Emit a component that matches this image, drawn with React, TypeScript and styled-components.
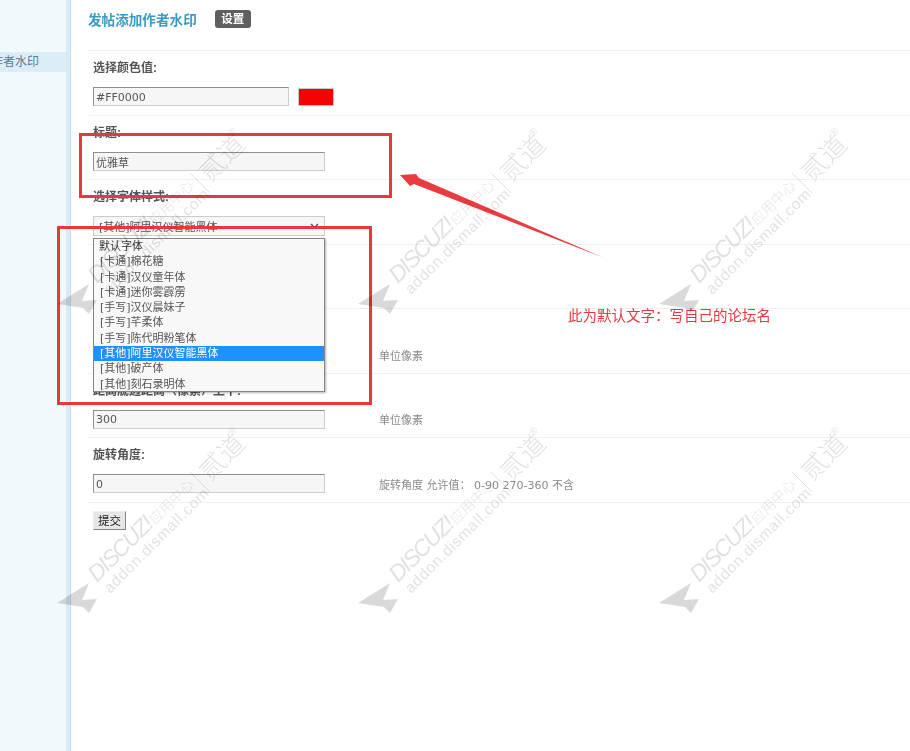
import React from "react";
import styled, { createGlobalStyle } from "styled-components";

const Global = createGlobalStyle`
  html, body { margin: 0; padding: 0; height: 100%; overflow: hidden; background: #fff; }
  body { font-family: "Liberation Sans", "Noto Sans CJK SC", sans-serif; font-size: 12px; color: #555; }
  * { box-sizing: border-box; }
`;

const Page = styled.div`
  position: relative;
  display: flex;
  width: 910px;
  height: 751px;
  overflow: hidden;
  filter: blur(0.35px);
`;

const Sidebar = styled.aside`
  flex: 0 0 70px;
  min-width: 0;
  padding-top: 52px;
  background: #f1f9fd;
  border-right: 4px solid #d8ebf7;
  box-shadow: 1px 0 0 #c4deef;
`;

const SideItem = styled.div`
  display: flex;
  justify-content: flex-end;
  height: 20px;
  padding-right: 27px;
  overflow: hidden;
  background: #dcedf8;
  color: #5a7c93;
  font-size: 12px;
  line-height: 21px;
  white-space: nowrap;
`;

const SideText = styled.span`
  flex: none;
`;

const Main = styled.main`
  flex: 1;
  min-width: 0;
  padding-left: 18px;
`;

const Head = styled.header`
  display: flex;
  align-items: center;
  gap: 18px;
  height: 50px;
  padding-bottom: 12px;
`;

const Title = styled.h1`
  margin: 0;
  font-size: 13.6px;
  font-weight: bold;
  color: #3b9bc4;
`;

const Badge = styled.span`
  width: 36px;
  height: 18px;
  border-radius: 3px;
  background: #5f5f5f;
  color: #fff;
  font-size: 11.5px;
  font-weight: bold;
  line-height: 18px;
  text-align: center;
`;

const Row = styled.div`
  height: 64.5px;
  padding: 8px 0 0 5px;
  border-top: 1px solid #f0f0f0;
`;

const Actions = styled.div`
  padding-left: 5px;
  border-top: 1px solid #f0f0f0;
`;

const Label = styled.div`
  height: 18px;
  margin-bottom: 10px;
  font-size: 12px;
  font-weight: bold;
  line-height: 18px;
  color: #555;
`;

const Field = styled.div`
  display: flex;
  align-items: center;
`;

const Input = styled.input<{ $wide?: boolean }>`
  width: ${(p) => (p.$wide ? "232px" : "196px")};
  height: 19px;
  padding: 1px 2px 0;
  border: 1px solid #ccc;
  border-top-color: #8f8f8f;
  border-left-color: #8f8f8f;
  background: #f6f6f6;
  border-radius: 0;
  outline: none;
  font-family: "DejaVu Sans", "Noto Sans CJK SC", sans-serif;
  font-size: 11px;
  color: #555;
`;

const Swatch = styled.span`
  width: 36px;
  height: 18px;
  margin-left: 9px;
  background: #f60000;
  border: 1px solid #c9c9c9;
`;

const Hint = styled.span`
  margin-left: 54px;
  font-family: "DejaVu Sans", "Noto Sans CJK SC", sans-serif;
  font-size: 11px;
  color: #8a8a8a;
`;

const SelectBox = styled.div`
  display: flex;
  align-items: center;
  justify-content: space-between;
  width: 232px;
  height: 20px;
  margin-top: 1px;
  padding: 0 5px;
  border: 1px solid #ccc;
  background: #f8f7f4;
  font-family: "DejaVu Sans", "Noto Sans CJK SC", sans-serif;
  font-size: 11px;
  color: #555;
`;

const Submit = styled.button`
  display: block;
  width: 33px;
  height: 19px;
  margin-top: 8px;
  padding: 0;
  border: 1px solid;
  border-color: #eee #888 #888 #eee;
  background: #e6e6e6;
  font-family: "Liberation Sans", "Noto Sans CJK SC", sans-serif;
  font-size: 11.5px;
  color: #222;
  border-radius: 0;
`;

const Dropdown = styled.ul`
  position: absolute;
  left: 93px;
  top: 238px;
  width: 232px;
  height: 154px;
  margin: 0;
  padding: 0;
  list-style: none;
  border: 1px solid #858585;
  background: #f8f8f8;
  box-shadow: 1px 1px 2px rgba(0, 0, 0, 0.3);
  font-family: "DejaVu Sans", "Noto Sans CJK SC", sans-serif;
  font-size: 11px;
  color: #555;
`;

const Option = styled.li<{ $active?: boolean; $first?: boolean }>`
  height: 15.3px;
  padding-left: ${(p) => (p.$first ? "5px" : "6px")};
  line-height: 15.3px;
  white-space: nowrap;
  background: ${(p) => (p.$active ? "#1e90ff" : "transparent")};
  color: ${(p) => (p.$active ? "#fff" : p.$first ? "#333" : "#555")};
`;

const RedBox = styled.div<{ $x: number; $y: number; $w: number; $h: number }>`
  position: absolute;
  left: ${(p) => p.$x}px;
  top: ${(p) => p.$y}px;
  width: ${(p) => p.$w}px;
  height: ${(p) => p.$h}px;
  border: 3px solid #e8383d;
`;

const ArrowSvg = styled.svg`
  position: absolute;
  left: 390px;
  top: 165px;
`;

const Note = styled.div`
  position: absolute;
  left: 568px;
  top: 306px;
  font-size: 14.5px;
  line-height: 20px;
  color: #e8383d;
  white-space: nowrap;
`;

const MarkLayer = styled.div`
  position: absolute;
  left: 57px;
  top: 131px;
  display: grid;
  grid-template-columns: repeat(3, 301px);
  grid-auto-rows: 299px;
  pointer-events: none;
`;

const MarkSvg = styled.svg`
  overflow: visible;
`;

const FONT_CN = `"Noto Sans CJK SC", sans-serif`;
const INK = "rgba(0,0,0,0.12)";

const Mark = () => (
  <MarkSvg width={230} height={190} viewBox="0 0 230 190">
    <polygon points="0,173 32,153 25,170 40,169 32,183 26,177" fill="rgba(0,0,0,0.15)" />
    <g fill={INK}>
      <text transform="translate(40 153) rotate(-45)" fontFamily="Liberation Sans" fontStyle="italic" fontSize="23" textLength={82}>
        DISCUZ!
      </text>
      <text transform="translate(98 95) rotate(-45)" fontFamily={FONT_CN} fontWeight="300" fontSize="14" textLength={56}>
        应用中心
      </text>
      <text transform="translate(53 164) rotate(-45)" fontFamily="Liberation Sans" fontSize="15.5" textLength={141}>
        addon.dismall.com
      </text>
      <text transform="translate(153 52) rotate(-45)" fontFamily={FONT_CN} fontWeight="300" fontSize="26">
        贰道
      </text>
      <text transform="translate(175 6) rotate(-45)" fontFamily="Liberation Sans" fontSize="10">
        ®
      </text>
    </g>
    <line x1="133" y1="42" x2="153" y2="62" stroke={INK} strokeWidth="1" />
  </MarkSvg>
);

const OPTIONS = [
  "默认字体",
  "[卡通]棉花糖",
  "[卡通]汉仪童年体",
  "[卡通]迷你雾霹雳",
  "[手写]汉仪晨妹子",
  "[手写]芊柔体",
  "[手写]陈代明粉笔体",
  "[其他]阿里汉仪智能黑体",
  "[其他]破产体",
  "[其他]刻石录明体",
];

export default function App() {
  return (
    <>
      <Global />
      <Page>
        <Sidebar>
          <SideItem>
            <SideText>发帖添加作者水印</SideText>
          </SideItem>
        </Sidebar>
        <Main>
          <Head>
            <Title>发帖添加作者水印</Title>
            <Badge>设置</Badge>
          </Head>
          <Row>
            <Label>选择颜色值:</Label>
            <Field>
              <Input defaultValue="#FF0000" />
              <Swatch />
            </Field>
          </Row>
          <Row>
            <Label>标题:</Label>
            <Field>
              <Input $wide defaultValue="优雅草" />
            </Field>
          </Row>
          <Row>
            <Label>选择字体样式:</Label>
            <SelectBox>
              <span>[其他]阿里汉仪智能黑体</span>
              <svg width="9" height="6" viewBox="0 0 9 6">
                <path d="M1 1l3.5 3.5L8 1" fill="none" stroke="#555" strokeWidth="1.4" />
              </svg>
            </SelectBox>
          </Row>
          <Row />
          <Row>
            <Label />
            <Field>
              <Input $wide />
              <Hint>单位像素</Hint>
            </Field>
          </Row>
          <Row>
            <Label>距离底边距离（像素）上下:</Label>
            <Field>
              <Input $wide defaultValue="300" />
              <Hint>单位像素</Hint>
            </Field>
          </Row>
          <Row>
            <Label>旋转角度:</Label>
            <Field>
              <Input $wide defaultValue="0" />
              <Hint>旋转角度 允许值： 0-90 270-360 不含</Hint>
            </Field>
          </Row>
          <Actions>
            <Submit>提交</Submit>
          </Actions>
        </Main>

        <Dropdown>
          {OPTIONS.map((o, i) => (
            <Option key={o} $first={i === 0} $active={i === 7}>
              {o}
            </Option>
          ))}
        </Dropdown>

        <RedBox $x={79} $y={133} $w={313} $h={65} />
        <RedBox $x={57} $y={226} $w={315} $h={179} />
        <ArrowSvg width={225} height={100} viewBox="0 0 225 100">
          <polygon points="10,10 26,9 29,13 213,92.5 24,19 20,21" fill="#ea3c40" />
        </ArrowSvg>
        <Note>此为默认文字：写自己的论坛名</Note>

        <MarkLayer>
          {Array.from({ length: 6 }, (_, i) => (
            <Mark key={i} />
          ))}
        </MarkLayer>
      </Page>
    </>
  );
}
